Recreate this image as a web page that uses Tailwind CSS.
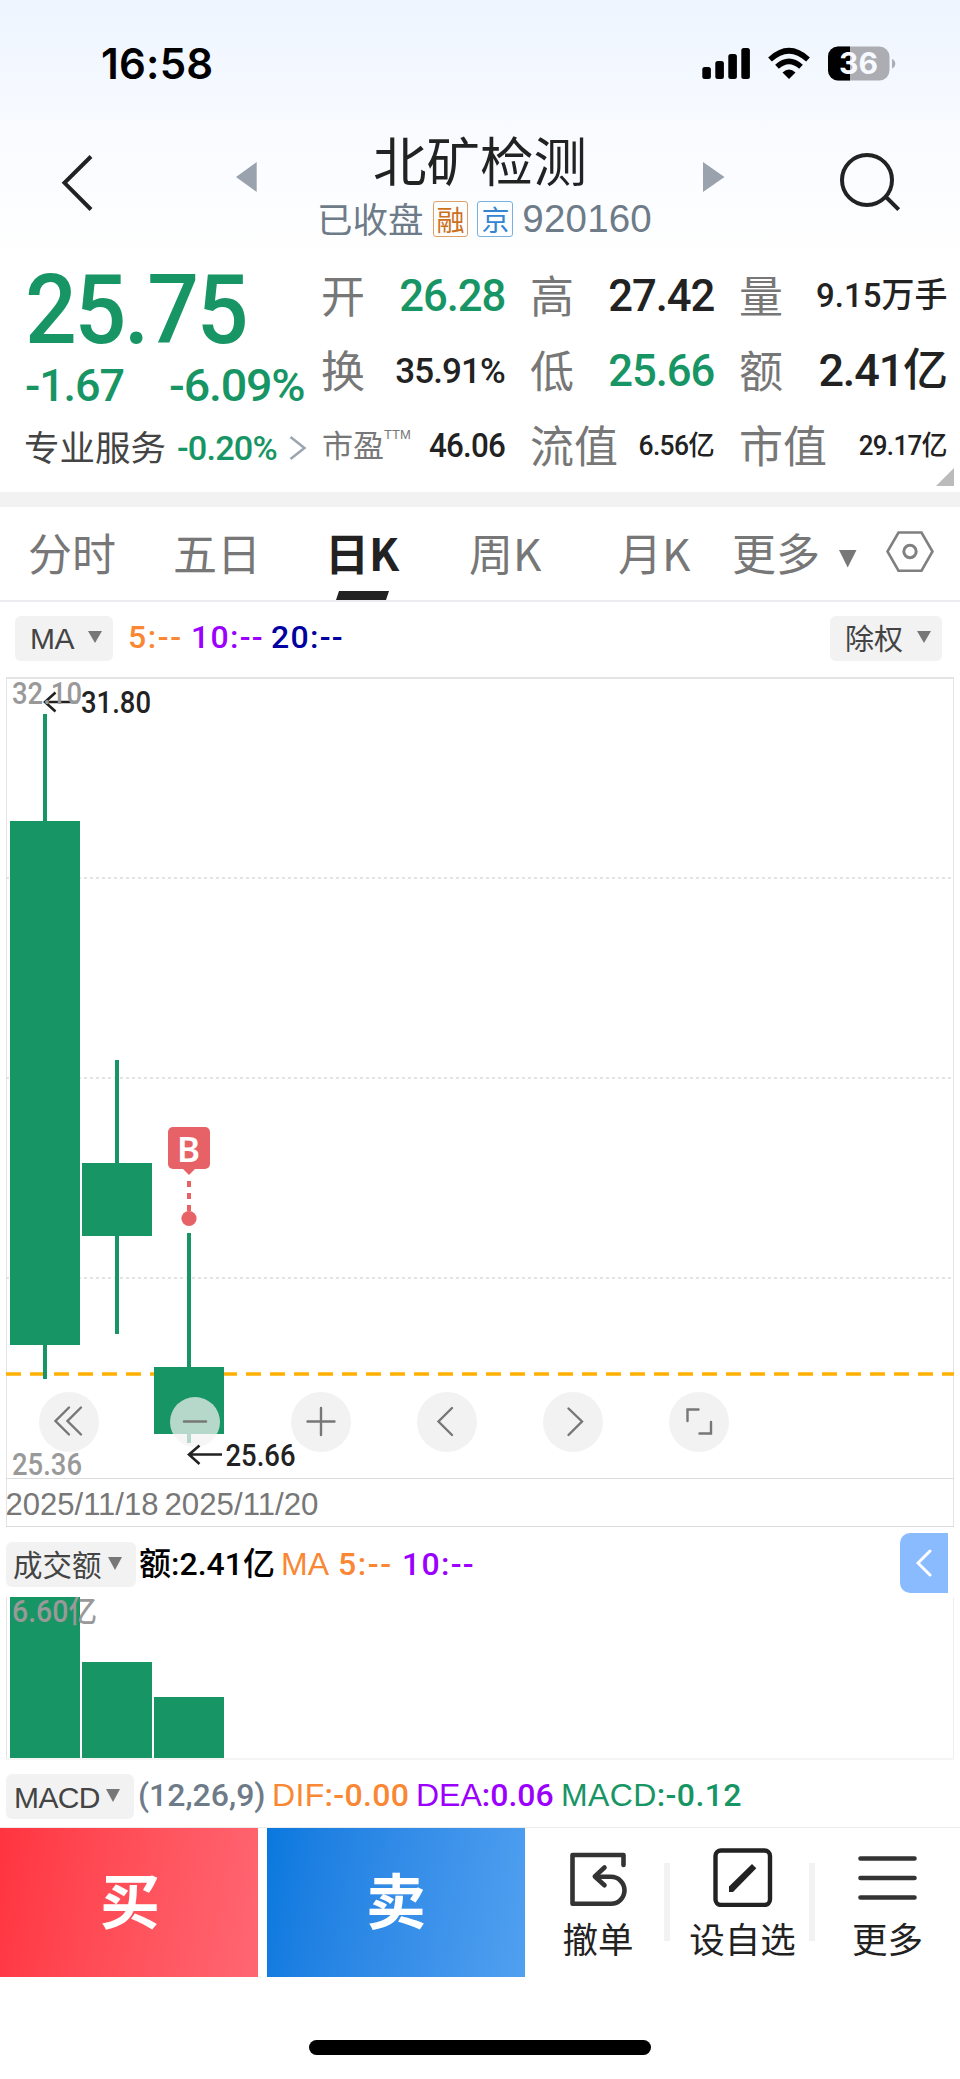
<!DOCTYPE html>
<html lang="zh-CN">
<head>
<meta charset="utf-8">
<title>北矿检测 920160</title>
<script src="https://cdn.jsdelivr.net/npm/@tailwindcss/browser@4"></script>
</head>
<body class="w-[960px] h-[2079px] overflow-hidden bg-white text-[#222] font-['Noto_Sans_CJK_SC',sans-serif] whitespace-nowrap">

<!-- Status bar and title -->
<header class="h-[259px] bg-linear-to-b from-[#eef5ff] via-[#f9fbff] via-55% to-white flex flex-col">
  <div class="h-[128px] pl-[101px] pr-[64px] flex items-center justify-between">
    <span class="font-['Inter',sans-serif] font-semibold text-[42px] leading-none text-black tracking-[0.005em]">16:58</span>
    <svg class="w-[196px] h-[40px]" viewBox="700 44 196 40">
      <g fill="#000">
        <rect x="702.3" y="67" width="8.6" height="12" rx="2.5"/>
        <rect x="715.3" y="61" width="8.6" height="18" rx="2.5"/>
        <rect x="728.3" y="54" width="8.6" height="25" rx="2.5"/>
        <rect x="741.3" y="48" width="8.6" height="31" rx="2.5"/>
        <path d="M789 79 L782.5 72.5 Q789 66.500 795.500 72.500 Z"/>
      </g>
      <g fill="none" stroke="#000" stroke-width="5.500">
        <path d="M770 59.500 Q789 42 808 59.500"/>
        <path d="M777 66.800 Q789 55.800 801 66.800"/>
      </g>
      <clipPath id="bat"><rect x="828" y="46.500" width="61.500" height="34" rx="10"/></clipPath>
      <g clip-path="url(#bat)">
        <rect x="828" y="46" width="62" height="35" fill="#abadb2"/>
        <rect x="828" y="46" width="22" height="35" fill="#000"/>
      </g>
      <path d="M892 59 Q895.300 60.500 895.300 63.700 Q895.300 67 892 68.500 Z" fill="#abadb2"/>
      <text x="839" y="74" font-family="Inter" font-weight="700" font-size="30" textLength="39" lengthAdjust="spacingAndGlyphs" fill="#f6f9ff">36</text>
    </svg>
  </div>
  <div class="h-[131px] flex">
    <svg class="w-[317px] h-[131px] shrink-0" viewBox="0 128 317 131">
      <path d="M91 156.500 L64.500 182.800 L91 209.500" fill="none" stroke="#222" stroke-width="4"/>
      <path d="M236 177 L256.700 162 V192 Z" fill="#9aa3ad"/>
    </svg>
    <div class="w-[335px] flex flex-col">
      <div class="h-[66px] pl-[56px] text-[53.500px] leading-[62px]">北矿检测</div>
      <div class="h-[50px] w-full flex items-center text-[#6e7b88]">
        <span class="w-[116px] text-[35.500px] leading-[46px] -mt-[3px]">已收盘</span>
        <span class="size-[36px] border border-[#dfa067] rounded-[3px] flex items-center justify-center text-[28px] leading-[30px] text-[#cc701c]">融</span>
        <span class="ml-[9px] size-[36px] border border-[#7ab0e0] rounded-[3px] flex items-center justify-center text-[28px] leading-[30px] text-[#3385d2]">京</span>
        <span class="ml-[9px] font-['Liberation_Sans',sans-serif] text-[38.500px] leading-none pt-[1px] tracking-[0.005em]">920160</span>
      </div>
    </div>
    <svg class="w-[308px] h-[131px] shrink-0" viewBox="652 128 308 131">
      <path d="M703 162 L724.500 177 L703 192 Z" fill="#9aa3ad"/>
      <g fill="none" stroke="#222" stroke-width="4"><circle cx="867" cy="180" r="25"/><path d="M885.500 196.500 L898.700 209.700"/></g>
    </svg>
  </div>
</header>

<!-- Quote panel -->
<section class="h-[233px] flex relative font-['Roboto','Noto_Sans_CJK_SC',sans-serif]">
  <div class="w-[322px] text-[#189564]">
    <div class="h-[101px] pl-[25px] pt-[3px] text-[96px] leading-[96px] font-medium tracking-[-0.025em]"><span class="inline-block origin-left scale-x-[0.95]">25.75</span></div>
    <div class="h-[50px] pl-[25px] flex items-center text-[45px] leading-none font-medium tracking-[-0.025em]"><span class="w-[144px]">-1.67</span><span class="origin-left scale-x-[1.035]">-6.09%</span></div>
    <div class="h-[76px] pl-[24px] flex items-center text-[33px] leading-none tracking-[-0.025em]">
      <span class="w-[153px] font-['Noto_Sans_CJK_SC'] text-[35.500px] leading-[44px] text-[#444] tracking-normal -mt-[4px]">专业服务</span>
      <span class="w-[112px] font-medium"><span class="inline-block origin-left scale-x-[1.04]">-0.20%</span></span>
      <svg class="w-[18px] h-[26px]" viewBox="0 0 18 26"><path d="M1.500 2 L15.500 13 L1.500 24" fill="none" stroke="#9aa5b2" stroke-width="2.500"/></svg>
    </div>
  </div>
  <div class="w-[626px] h-[225px] grid grid-cols-[183px_183px_207px] grid-rows-3 gap-x-[26px] font-medium text-[#222]">
    <div class="flex items-center justify-between"><span class="font-['Noto_Sans_CJK_SC'] font-normal text-[#777] text-[44px] leading-none -ml-[1px] -mt-[6px]">开</span><span class="text-[45px] leading-none tracking-[-0.025em] text-[#189564] -mt-[2px] origin-right scale-x-[0.97]">26.28</span></div>
    <div class="flex items-center justify-between"><span class="font-['Noto_Sans_CJK_SC'] font-normal text-[#777] text-[44px] leading-none -ml-[1px] -mt-[6px]">高</span><span class="text-[45px] leading-none tracking-[-0.025em] -mt-[2px] origin-right scale-x-[0.97]">27.42</span></div>
    <div class="flex items-center justify-between"><span class="font-['Noto_Sans_CJK_SC'] font-normal text-[#777] text-[44px] leading-none -ml-[1px] -mt-[6px]">量</span><span class="text-[34px] leading-none -mt-[3px] origin-right scale-x-[0.97]">9.15万手</span></div>
    <div class="flex items-center justify-between"><span class="font-['Noto_Sans_CJK_SC'] font-normal text-[#777] text-[44px] leading-none -ml-[1px] -mt-[6px]">换</span><span class="text-[35px] leading-none tracking-[-0.025em]">35.91%</span></div>
    <div class="flex items-center justify-between"><span class="font-['Noto_Sans_CJK_SC'] font-normal text-[#777] text-[44px] leading-none -ml-[1px] -mt-[6px]">低</span><span class="text-[45px] leading-none tracking-[-0.025em] text-[#189564] -mt-[2px] origin-right scale-x-[0.97]">25.66</span></div>
    <div class="flex items-center justify-between"><span class="font-['Noto_Sans_CJK_SC'] font-normal text-[#777] text-[44px] leading-none -ml-[1px] -mt-[6px]">额</span><span class="text-[45px] leading-none tracking-[-0.025em] -mt-[2px]">2.41亿</span></div>
    <div class="flex items-center justify-between"><span class="flex font-['Noto_Sans_CJK_SC'] font-normal text-[#777] text-[31px] leading-none -mt-[6px]">市盈<span class="font-['Liberation_Sans'] font-normal text-[13px] leading-none">TTM</span></span><span class="text-[33px] leading-none tracking-[-0.025em] -mt-[3px] origin-right scale-x-[0.95]">46.06</span></div>
    <div class="flex items-center justify-between"><span class="font-['Noto_Sans_CJK_SC'] font-normal text-[#777] text-[44px] leading-none -ml-[1px] -mt-[6px]">流值</span><span class="text-[27px] leading-none tracking-[-0.025em] origin-right scale-x-[0.98]">6.56亿</span></div>
    <div class="flex items-center justify-between"><span class="font-['Noto_Sans_CJK_SC'] font-normal text-[#777] text-[44px] leading-none -ml-[1px] -mt-[6px]">市值</span><span class="text-[27px] leading-none tracking-[-0.025em] origin-right scale-x-[0.96]">29.17亿</span></div>
  </div>
  <svg class="absolute right-[6px] bottom-[6px] size-[18px]" viewBox="0 0 18 18"><path d="M18 0 V18 H0 Z" fill="#bbb"/></svg>
</section>

<div class="h-[15px] bg-[#f2f2f2]"></div>

<!-- Period tabs -->
<nav class="h-[95px] border-b-2 border-[#ebebf0] flex text-[44px] leading-[90px] font-normal text-[#777]">
  <span class="w-[145px] pl-[28px]">分时</span>
  <span class="w-[180px] pl-[28px]">五日</span>
  <span class="w-[144px] relative font-bold text-[#222]">日K
    <svg class="absolute left-[11px] bottom-0 w-[53px] h-[9px]" viewBox="0 0 53 9"><path d="M3 0 H53 L50 9 H0 Z" fill="#222"/></svg>
  </span>
  <span class="w-[149px]">周K</span>
  <span class="w-[114px]">月K</span>
  <span class="w-[107px]">更多</span>
  <svg class="w-[96px] h-[93px]" viewBox="839 507 96 93">
    <path d="M839 550 H856.500 L847.700 567.500 Z" fill="#777"/>
    <g fill="none" stroke="#808080" stroke-width="2.600"><path d="M898.500 532.500 H921.500 L932.500 551.500 L921.500 570.700 H898.500 L887.500 551.500 Z"/><circle cx="910" cy="551.500" r="6.200" stroke-width="3"/></g>
  </svg>
</nav>

<!-- Moving-average row -->
<div class="h-[75px] pl-[15px] pr-[18px] pb-[4px] flex items-center font-['Roboto'] font-medium text-[32px] leading-none">
  <span class="w-[98px] h-[45px] mt-[1px] rounded-[6px] bg-[#f2f2f2] flex items-center pl-[15px] font-['Liberation_Sans'] font-normal text-[30px] text-[#444]"><span class="w-[58px] tracking-[-0.02em] pt-[2px]">MA</span><svg class="w-[14px] h-[12px] -mt-[3px]" viewBox="0 0 14 12"><path d="M0 0 H14 L7 12 Z" fill="#777"/></svg></span>
  <span class="w-[63px] ml-[15px] -mt-[2px] tracking-[0.05em] text-[#f98734]">5:--</span>
  <span class="w-[80px] -mt-[2px] tracking-[0.04em] text-[#9b00ff]">10:--</span>
  <span class="-mt-[2px] tracking-[0.04em] text-[#0000a0]">20:--</span>
  <span class="ml-auto w-[112px] h-[45px] mt-[1px] rounded-[6px] bg-[#f2f2f2] flex items-center pl-[15px] font-['Noto_Sans_CJK_SC'] font-normal text-[29px] text-[#444]"><span class="w-[72px] -mt-[2px]">除权</span><svg class="w-[14px] h-[12px] -mt-[3px]" viewBox="0 0 14 12"><path d="M0 0 H14 L7 12 Z" fill="#777"/></svg></span>
</div>

<!-- Candlestick chart -->
<svg class="block w-[960px] h-[853px]" viewBox="0 677 960 853">
  <g fill="#e4e4e4">
    <rect x="6" y="677" width="948" height="2"/>
    <rect x="6" y="677" width="1" height="850"/>
    <rect x="953" y="677" width="1" height="850"/>
    <rect x="6" y="1478" width="948" height="1" fill="#dcdcdc"/>
    <rect x="6" y="1526" width="948" height="1" fill="#dcdcdc"/>
  </g>
  <g stroke="#dcdcdc" stroke-width="1.500" stroke-dasharray="3 3"><path d="M6 878 H953"/><path d="M6 1078 H953"/><path d="M6 1278 H953"/></g>
  <path d="M6 1374 H954" stroke="#ffb000" stroke-width="3.300" stroke-dasharray="15 9"/>
  <g fill="#189564">
    <rect x="10" y="821" width="70" height="524"/><rect x="43" y="714" width="4" height="665"/>
    <rect x="82" y="1163" width="70" height="73"/><rect x="115" y="1060" width="4" height="274"/>
    <rect x="154" y="1367" width="70" height="67"/><rect x="187" y="1233" width="4" height="210"/>
  </g>
  <g fill="#e66266">
    <rect x="168" y="1127" width="42" height="42" rx="5"/>
    <path d="M183 1169 H195 L189 1175 Z"/>
    <rect x="187" y="1181" width="4" height="6"/><rect x="187" y="1193" width="4" height="6"/><rect x="187" y="1205" width="4" height="6"/>
    <circle cx="189" cy="1218.500" r="7.600"/>
  </g>
  <text x="177" y="1162" font-family="Noto Sans" font-weight="600" font-size="35" fill="#fff">B</text>
  <g fill="#f2f2f2">
    <circle cx="69" cy="1422" r="30"/><circle cx="195" cy="1422" r="25" opacity=".72"/><circle cx="321" cy="1422" r="30"/>
    <circle cx="447" cy="1422" r="30"/><circle cx="573" cy="1422" r="30"/><circle cx="699" cy="1422" r="30"/>
  </g>
  <g fill="none" stroke="#777" stroke-width="2.400" stroke-linecap="round">
    <path d="M69 1407.500 L55.500 1421 L69 1434.500 M81 1407.500 L67.500 1421 L81 1434.500"/>
    <path d="M184 1421.500 H206"/>
    <path d="M307.500 1421.500 H334.500 M321 1408 V1435"/>
    <path d="M452 1408 L438.500 1421.500 L452 1435"/>
    <path d="M568.500 1408.500 L582 1421.500 L568.500 1435"/>
    <path d="M687.500 1421 V1409.500 H698.500 M711 1422 V1433.500 H699.500"/>
  </g>
  <g fill="none" stroke="#222" stroke-width="2.600"><path d="M78 702 H45 M55.500 692.500 L45 702 L55.500 711.500"/><path d="M222 1454.500 H189 M199.500 1445.500 L189 1454.500 L199.500 1464"/></g>
  <g font-family="Roboto" font-size="31" font-weight="500">
    <text x="12" y="704" fill="#999" textLength="70" lengthAdjust="spacingAndGlyphs">32.10</text>
    <text x="81" y="713" fill="#222" textLength="70" lengthAdjust="spacingAndGlyphs">31.80</text>
    <text x="225.500" y="1466" fill="#222" textLength="70" lengthAdjust="spacingAndGlyphs">25.66</text>
    <text x="12" y="1475" fill="#999" textLength="70" lengthAdjust="spacingAndGlyphs">25.36</text>
  </g>
  <g font-family="Liberation Sans" font-size="30.500" fill="#777">
    <text x="5.500" y="1515" textLength="153" lengthAdjust="spacingAndGlyphs">2025/11/18</text>
    <text x="164.500" y="1515" textLength="154" lengthAdjust="spacingAndGlyphs">2025/11/20</text>
  </g>
</svg>

<!-- Turnover row -->
<div class="h-[67px] pl-[6px] pr-[12px] flex items-center font-['Roboto','Noto_Sans_CJK_SC'] font-medium text-[32px] leading-none">
  <span class="w-[130px] h-[45px] mt-[2px] rounded-[6px] bg-[#f2f2f2] flex items-center pl-[7px] font-['Noto_Sans_CJK_SC'] font-normal text-[29.500px] text-[#444]"><span class="w-[95px] -mt-[1px]">成交额</span><svg class="w-[14px] h-[13px] -mt-[3px]" viewBox="0 0 14 13"><path d="M0 0 H14 L7 13 Z" fill="#777"/></svg></span>
  <span class="w-[142px] ml-[3px] text-black">额:2.41亿</span>
  <span class="w-[57px] font-['Liberation_Sans'] font-normal text-[#f98734]">MA</span>
  <span class="w-[64px] tracking-[0.05em] text-[#f98734]">5:--</span>
  <span class="tracking-[0.04em] text-[#9b00ff]">10:--</span>
  <span class="ml-auto -mt-[2px] w-[48px] h-[60px] bg-[#8abbff] rounded-l-[10px] flex items-center justify-center"><svg class="w-[16px] h-[28px]" viewBox="0 0 16 28"><path d="M14 2 L2 14 L14 26" fill="none" stroke="#fff" stroke-width="3" stroke-linecap="round"/></svg></span>
</div>
<svg class="block w-[960px] h-[163px]" viewBox="0 1597 960 163">
  <rect x="6" y="1597" width="1" height="162" fill="#e4e4e4"/><rect x="953" y="1597" width="1" height="162" fill="#eee"/><rect x="6" y="1758" width="948" height="2" fill="#f5f5f5"/>
  <g fill="#189564"><rect x="10" y="1597" width="70" height="161"/><rect x="82" y="1662" width="70" height="96"/><rect x="154" y="1697" width="70" height="61"/></g>
  <text x="12" y="1622" font-family="Roboto, Noto Sans CJK SC" font-size="31" font-weight="500" fill="#999" textLength="85" lengthAdjust="spacingAndGlyphs">6.60亿</text>
</svg>

<!-- MACD row -->
<div class="h-[68px] pl-[6px] border-b border-[#ececec] flex items-center font-['Roboto'] font-medium text-[32px] leading-none">
  <span class="w-[128px] h-[45px] mt-[6px] rounded-[6px] bg-[#f2f2f2] flex items-center pl-[8px] font-['Liberation_Sans'] font-normal text-[30px] text-[#444]"><span class="w-[92px] tracking-[-0.02em] pt-[3px]">MACD</span><svg class="w-[14px] h-[13px] -mt-[3px]" viewBox="0 0 14 13"><path d="M0 0 H14 L7 13 Z" fill="#777"/></svg></span>
  <span class="w-[134px] ml-[4px] pt-[3px] text-[#6e7b88]">(12,26,9)</span>
  <span class="w-[144px] pt-[3px] tracking-[0.01em] text-[#f98734]"><span class="font-['Liberation_Sans'] font-normal">DIF</span>:-0.00</span>
  <span class="w-[145px] pt-[3px] text-[#9b00ff]"><span class="font-['Liberation_Sans'] font-normal">DEA</span>:0.06</span>
  <span class="pt-[3px] tracking-[0.012em] text-[#189564]"><span class="font-['Liberation_Sans'] font-normal">MACD</span>:-0.12</span>
</div>

<!-- Trade bar -->
<footer class="h-[149px] flex text-[35.500px] leading-none">
  <div class="w-[258px] pb-[9px] pl-[2px] bg-linear-100 from-[#ff3340] to-[#ff6672] flex items-center justify-center text-white font-bold text-[60px]">买</div>
  <div class="ml-[9px] w-[258px] pb-[9px] bg-linear-100 from-[#0778de] to-[#50a0f0] flex items-center justify-center text-white font-bold text-[60px]">卖</div>
  <div class="w-[139px] pl-[7px] flex flex-col items-center">
    <svg class="w-[60px] h-[60px] mt-[19px] mb-[13px]" viewBox="569 1847 60 60"><path d="M624.500 1865 V1855 H573.500 V1903.800 H612 A13.500 13.500 0 0 0 612 1876.800 H597" fill="none" stroke="#333" stroke-width="4.600" stroke-linecap="round" stroke-linejoin="round"/><path d="M605.500 1867.500 L595.800 1876.500 L605.500 1885.300" fill="none" stroke="#333" stroke-width="4.600" stroke-linecap="round" stroke-linejoin="round"/></svg>
    <span>撤单</span>
  </div>
  <div class="w-[6px] h-[78px] mt-[35px] bg-[#f2f2f2]"></div>
  <div class="w-[139px] pl-[6px] flex flex-col items-center">
    <svg class="w-[60px] h-[60px] mt-[19px] mb-[13px]" viewBox="713 1847 60 60"><rect x="715.500" y="1850.500" width="54.500" height="54.500" rx="5.500" fill="none" stroke="#222" stroke-width="4.400"/><path d="M729 1892 V1886.500 L752 1864 L756.300 1868.300 L733 1892 Z" fill="#222"/></svg>
    <span>设自选</span>
  </div>
  <div class="w-[6px] h-[78px] mt-[35px] bg-[#f2f2f2]"></div>
  <div class="w-[145px] flex flex-col items-center">
    <svg class="w-[60px] h-[60px] mt-[19px] mb-[13px]" viewBox="857 1847 60 60"><path d="M859.500 1858.500 H913.500 M859.500 1878 H913.500 M859.500 1897.500 H913.500" fill="none" stroke="#333" stroke-width="4.600" stroke-linecap="round"/></svg>
    <span>更多</span>
  </div>
</footer>
<div class="h-[102px] pt-[63px] pl-[309px]"><div class="w-[342px] h-[15px] rounded-full bg-black"></div></div>
</body>
</html>
